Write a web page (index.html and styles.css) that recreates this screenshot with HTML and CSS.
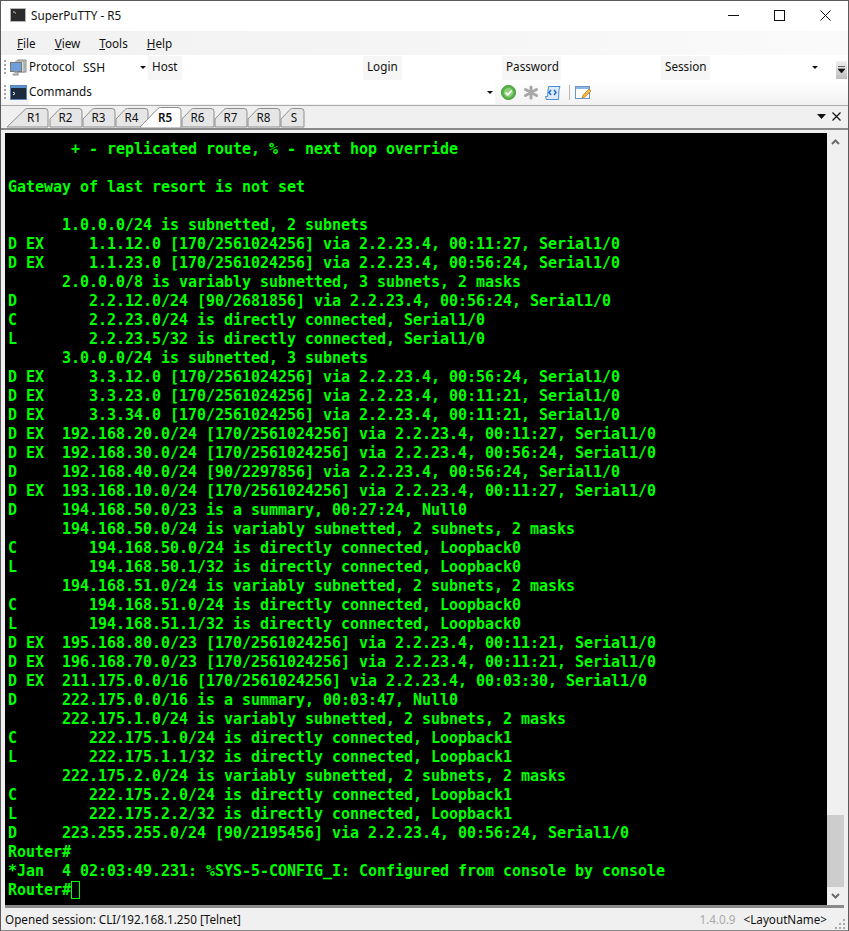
FILE: index.html
```html
<!DOCTYPE html>
<html lang="en">
<head>
<meta charset="utf-8">
<title>SuperPuTTY - R5</title>
<link rel="stylesheet" href="styles.css">
</head>
<body>
<div class="window">
  <header class="titlebar">
    <svg class="app-icon" width="16" height="14" viewBox="0 0 16 14"><rect x=".5" y=".5" width="15" height="13" fill="#2b2b2b" stroke="#b5b5b5"/><path d="M3 4h2M5 5h1" stroke="#ccc"/></svg>
    <span class="title-text">SuperPuTTY - R5</span>
    <div class="win-buttons">
      <svg width="11" height="11" viewBox="0 0 11 11"><path d="M0 5.500h11" stroke="#111"/></svg>
      <svg width="11" height="11" viewBox="0 0 11 11"><rect x=".5" y=".5" width="10" height="10" fill="none" stroke="#111"/></svg>
      <svg width="11" height="11" viewBox="0 0 11 11"><path d="M.5.500l10 10M10.500.500l-10 10" stroke="#111"/></svg>
    </div>
  </header>

  <nav class="menubar">
    <span class="menu-item"><u>F</u>ile</span>
    <span class="menu-item"><u>V</u>iew</span>
    <span class="menu-item"><u>T</u>ools</span>
    <span class="menu-item"><u>H</u>elp</span>
  </nav>

  <div class="toolbar toolbar-conn">
    <span class="grip"></span>
    <svg class="tool-icon" width="17" height="17" viewBox="0 0 17 17"><rect x="8" y="1" width="8" height="12" fill="#ccc" stroke="#8a8a8a"/><rect x="6" y="2" width="8" height="11" fill="#ddd" stroke="#999"/><rect x=".5" y="3.500" width="11" height="9" fill="#6f9fd8" stroke="#777"/><path d="M4 13h4v2H3v1h6" fill="#bbb" stroke="#999"/><path d="M14 7h1" stroke="#3c3"/></svg>
    <span class="tool-label label-protocol">Protocol</span>
    <span class="combo combo-proto"><span class="combo-text">SSH</span><span class="combo-arrow"></span></span>
    <span class="tool-label label-host">Host</span>
    <span class="field field-host"></span>
    <span class="tool-label label-login">Login</span>
    <span class="field field-login"></span>
    <span class="tool-label label-password">Password</span>
    <span class="field field-pass"></span>
    <span class="tool-label label-session">Session</span>
    <span class="combo combo-session"><span class="combo-arrow"></span></span>
    <span class="overflow-btn"><svg width="7" height="8" viewBox="0 0 7 8"><path d="M0 .5h7M0 3h7L3.500 7z" fill="#111" stroke="#111" stroke-width=".6"/></svg></span>
  </div>

  <div class="toolbar toolbar-cmd">
    <span class="grip"></span>
    <svg class="tool-icon" width="17" height="16" viewBox="0 0 17 16"><rect x=".5" y=".5" width="16" height="14" fill="#1d2b3c" stroke="#5b86b8"/><rect x="1" y="1" width="15" height="2" fill="#5f93d0"/><path d="M3 7l2 1.500L3 10" fill="none" stroke="#fff"/></svg>
    <span class="tool-label label-commands">Commands</span>
    <span class="combo combo-cmd"><span class="combo-arrow"></span></span>
    <svg class="cmd-icon cmd-check" width="15" height="15" viewBox="0 0 15 15"><circle cx="7.500" cy="7.500" r="7" fill="#5cb54a" stroke="#3f9233"/><circle cx="7.500" cy="7.500" r="4.600" fill="#8bd27a"/><path d="M4.500 7.500l2.200 2.200 4-4" fill="none" stroke="#fff" stroke-width="1.800"/></svg>
    <svg class="cmd-icon cmd-star" width="16" height="15" viewBox="0 0 16 15"><path d="M8 2v11M2.500 4.500l11 6M13.500 4.500l-11 6" stroke="#a8a8a8" stroke-width="3" stroke-linecap="round"/></svg>
    <svg class="cmd-icon cmd-script" width="16" height="16" viewBox="0 0 16 16"><path d="M3.500 1.500h11.500l-1 3-.5 10H1.500l-1-3h2z" fill="#dceafa" stroke="#4a8ed0"/><path d="M6 5L4 7.500 6 10M9 5l2 2.500L9 10" fill="none" stroke="#1f6fc0" stroke-width="1.500"/></svg>
    <span class="cmd-sep"></span>
    <svg class="cmd-icon cmd-edit" width="17" height="16" viewBox="0 0 17 16"><rect x=".5" y="1.500" width="14" height="12" fill="#fff" stroke="#6b93c4"/><rect x="1" y="2" width="13" height="2" fill="#8fb6e2"/><path d="M7 13l1-3 6-6 2 2-6 6z" fill="#f0b840" stroke="#b67a1c" stroke-width=".7"/></svg>
  </div>

  <div class="tabstrip">
    <div class="tab tab-first"><svg class="tab-shape" width="42" height="20" viewBox="0 0 42 20"><path d="M0 19L18 1.500Q19 .5 20.500 .5H38Q41 .5 41 3.500V19z" fill="#e6e6e6" stroke="#8f8f8f"/></svg><span class="tab-label">R1</span></div>
    <div class="tab"><svg class="tab-shape" width="34" height="20" viewBox="0 0 34 20"><path d="M1 19V11L10 1.500Q11 .5 12.500 .5H30Q33 .5 33 3.500V19z" fill="#e6e6e6" stroke="#8f8f8f"/></svg><span class="tab-label">R2</span></div>
    <div class="tab"><svg class="tab-shape" width="34" height="20" viewBox="0 0 34 20"><path d="M1 19V11L10 1.500Q11 .5 12.500 .5H30Q33 .5 33 3.500V19z" fill="#e6e6e6" stroke="#8f8f8f"/></svg><span class="tab-label">R3</span></div>
    <div class="tab"><svg class="tab-shape" width="34" height="20" viewBox="0 0 34 20"><path d="M1 19V11L10 1.500Q11 .5 12.500 .5H30Q33 .5 33 3.500V19z" fill="#e6e6e6" stroke="#8f8f8f"/></svg><span class="tab-label">R4</span></div>
    <div class="tab tab-active"><svg class="tab-shape" width="42" height="22" viewBox="0 0 42 22"><path d="M0 20L18 1.500Q19 .5 20.500 .5H38Q41 .5 41 3.500V21H0z" fill="#fff" stroke="#8f8f8f"/></svg><span class="tab-label">R5</span></div>
    <div class="tab"><svg class="tab-shape" width="34" height="20" viewBox="0 0 34 20"><path d="M1 19V11L10 1.500Q11 .5 12.500 .5H30Q33 .5 33 3.500V19z" fill="#e6e6e6" stroke="#8f8f8f"/></svg><span class="tab-label">R6</span></div>
    <div class="tab"><svg class="tab-shape" width="34" height="20" viewBox="0 0 34 20"><path d="M1 19V11L10 1.500Q11 .5 12.500 .5H30Q33 .5 33 3.500V19z" fill="#e6e6e6" stroke="#8f8f8f"/></svg><span class="tab-label">R7</span></div>
    <div class="tab"><svg class="tab-shape" width="34" height="20" viewBox="0 0 34 20"><path d="M1 19V11L10 1.500Q11 .5 12.500 .5H30Q33 .5 33 3.500V19z" fill="#e6e6e6" stroke="#8f8f8f"/></svg><span class="tab-label">R8</span></div>
    <div class="tab tab-last"><svg class="tab-shape" width="25" height="20" viewBox="0 0 25 20"><path d="M1 19V11L10 1.500Q11 .5 12.500 .5H21Q24 .5 24 3.500V19z" fill="#e6e6e6" stroke="#8f8f8f"/></svg><span class="tab-label">S</span></div>
    <div class="tab-controls">
      <svg width="9" height="5" viewBox="0 0 9 5"><path d="M0 0h9L4.500 5z" fill="#111"/></svg>
      <svg width="9" height="9" viewBox="0 0 9 9"><path d="M.5.500l8 8M8.500.500l-8 8" stroke="#111" stroke-width="1.200"/></svg>
    </div>
  </div>

  <main class="term-frame">
<pre class="terminal">       + - replicated route, % - next hop override

Gateway of last resort is not set

      1.0.0.0/24 is subnetted, 2 subnets
D EX     1.1.12.0 [170/2561024256] via 2.2.23.4, 00:11:27, Serial1/0
D EX     1.1.23.0 [170/2561024256] via 2.2.23.4, 00:56:24, Serial1/0
      2.0.0.0/8 is variably subnetted, 3 subnets, 2 masks
D        2.2.12.0/24 [90/2681856] via 2.2.23.4, 00:56:24, Serial1/0
C        2.2.23.0/24 is directly connected, Serial1/0
L        2.2.23.5/32 is directly connected, Serial1/0
      3.0.0.0/24 is subnetted, 3 subnets
D EX     3.3.12.0 [170/2561024256] via 2.2.23.4, 00:56:24, Serial1/0
D EX     3.3.23.0 [170/2561024256] via 2.2.23.4, 00:11:21, Serial1/0
D EX     3.3.34.0 [170/2561024256] via 2.2.23.4, 00:11:21, Serial1/0
D EX  192.168.20.0/24 [170/2561024256] via 2.2.23.4, 00:11:27, Serial1/0
D EX  192.168.30.0/24 [170/2561024256] via 2.2.23.4, 00:56:24, Serial1/0
D     192.168.40.0/24 [90/2297856] via 2.2.23.4, 00:56:24, Serial1/0
D EX  193.168.10.0/24 [170/2561024256] via 2.2.23.4, 00:11:27, Serial1/0
D     194.168.50.0/23 is a summary, 00:27:24, Null0
      194.168.50.0/24 is variably subnetted, 2 subnets, 2 masks
C        194.168.50.0/24 is directly connected, Loopback0
L        194.168.50.1/32 is directly connected, Loopback0
      194.168.51.0/24 is variably subnetted, 2 subnets, 2 masks
C        194.168.51.0/24 is directly connected, Loopback0
L        194.168.51.1/32 is directly connected, Loopback0
D EX  195.168.80.0/23 [170/2561024256] via 2.2.23.4, 00:11:21, Serial1/0
D EX  196.168.70.0/23 [170/2561024256] via 2.2.23.4, 00:11:21, Serial1/0
D EX  211.175.0.0/16 [170/2561024256] via 2.2.23.4, 00:03:30, Serial1/0
D     222.175.0.0/16 is a summary, 00:03:47, Null0
      222.175.1.0/24 is variably subnetted, 2 subnets, 2 masks
C        222.175.1.0/24 is directly connected, Loopback1
L        222.175.1.1/32 is directly connected, Loopback1
      222.175.2.0/24 is variably subnetted, 2 subnets, 2 masks
C        222.175.2.0/24 is directly connected, Loopback1
L        222.175.2.2/32 is directly connected, Loopback1
D     223.255.255.0/24 [90/2195456] via 2.2.23.4, 00:56:24, Serial1/0
Router#
*Jan  4 02:03:49.231: %SYS-5-CONFIG_I: Configured from console by console
Router#<span class="cursor"></span></pre>
    <div class="scrollbar">
      <svg class="scroll-arrow" width="9" height="6" viewBox="0 0 9 6"><path d="M1 5l3.500-3.500L8 5" fill="none" stroke="#6a6a6a" stroke-width="2"/></svg>
      <span class="scroll-track"><span class="scroll-thumb"></span></span>
      <svg class="scroll-arrow" width="9" height="6" viewBox="0 0 9 6"><path d="M1 1l3.500 3.500L8 1" fill="none" stroke="#6a6a6a" stroke-width="2"/></svg>
    </div>
  </main>

  <footer class="statusbar">
    <span class="status-text">Opened session: CLI/192.168.1.250 [Telnet]</span>
    <span class="status-version">1.4.0.9</span>
    <span class="status-layout">&lt;LayoutName&gt;</span>
    <svg class="resize-grip" width="11" height="11" viewBox="0 0 11 11"><path d="M8 1h2v2H8zM4 5h2v2H4zM8 5h2v2H8zM0 9h2v2H0zM4 9h2v2H4zM8 9h2v2H8z" fill="#a8a8a8"/></svg>
  </footer>
</div>
</body>
</html>
```
FILE: styles.css
```css
* { box-sizing: border-box; }
html, body { margin: 0; padding: 0; background: #fff; }
body { width: 849px; height: 931px; overflow: hidden; font-family: "Noto Sans", "Open Sans", sans-serif; font-size: 11.7px; color: #111; }
.window { width: 849px; height: 931px; display: flex; flex-direction: column; border: 1px solid #5a5a5a; border-bottom: 0; background: #f0f0f0; }

.titlebar { height: 30px; flex: none; display: flex; align-items: center; background: #fff; padding: 0 0 2px 9px; }
.app-icon { margin-right: 5px; }
.title-text { font-size: 11.7px; }
.win-buttons { margin-left: auto; display: flex; gap: 35px; padding-right: 17px; align-items: center; }

.menubar { height: 24px; flex: none; display: flex; align-items: center; padding-left: 16px; gap: 19px; background: linear-gradient(90deg, #f1f1f1, #fafafa); }
.menu-item { font-size: 11.7px; }

.toolbar { flex: none; display: flex; align-items: center; }
.toolbar-conn { height: 25px; background: #fff; padding-left: 3px; }
.toolbar-cmd { height: 26px; background: linear-gradient(#ffffff, #f2f2f2); padding-left: 3px; border-bottom: 1px solid #a9a9a9; }
.grip { width: 2px; height: 15px; margin-right: 4px; background: repeating-linear-gradient(#a5a5a5 0 2px, transparent 2px 4px); }
.tool-icon { margin-right: 2px; flex: none; }
.tool-label { font-size: 11.7px; height: 24px; line-height: 21px; background: #f6f6f6; padding: 0 4px 0 0; flex: none; }
.label-protocol { width: 50px; padding-left: 0; background: #fff; }
.label-host { width: 34px; padding-left: 4px; }
.label-login { width: 39px; padding-left: 4px; }
.label-password { width: 59px; padding-left: 4px; }
.label-session { width: 49px; padding-left: 4px; }
.label-commands { width: 66px; padding-left: 0; background: #fff; line-height: 21px; }
.field { display: block; height: 24px; background: #fff; flex: none; }
.field-host { width: 181px; }
.field-login { width: 100px; }
.field-pass { width: 100px; }
.combo { display: flex; align-items: center; height: 24px; background: #fff; flex: none; }
.combo-proto { width: 69px; padding-left: 4px; }
.combo-text { font-size: 12px; }
.combo-session { width: 110px; }
.combo-cmd { width: 400px; height: 22px; }
.combo-arrow { margin-left: auto; width: 11px; display: flex; justify-content: center; }
.combo-arrow::before { content: ""; border: 3px solid transparent; border-top: 3px solid #111; border-bottom: 0; }
.overflow-btn { margin-left: auto; width: 11px; height: 18px; align-self: flex-end; margin-bottom: 1px; background: linear-gradient(#f0f0f0, #bcbcbc); display: flex; align-items: center; justify-content: center; margin-right: 1px; }
.cmd-icon { flex: none; }
.cmd-check { margin-left: 6px; }
.cmd-star { margin-left: 7px; }
.cmd-script { margin-left: 6px; }
.cmd-edit { margin-left: 5px; }
.cmd-sep { width: 1px; height: 15px; background: #b5b5b5; margin: 0 0 0 8px; }

.tabstrip { height: 24px; flex: none; display: flex; align-items: flex-end; background: #f0f0f0; padding: 0 0 1px 6px; border-bottom: 2px solid #8a8a8a; }
.tab { position: relative; width: 33px; height: 20px; flex: none; text-align: center; }
.tab-shape { position: absolute; left: 0; bottom: -1px; }
.tab-label { position: relative; display: block; font-size: 11.7px; line-height: 21px; }
.tab-first { width: 42px; padding-left: 12px; }
.tab-active { margin-left: -8px; width: 41px; padding-left: 9px; z-index: 2; font-weight: 600; }
.tab-active .tab-shape { bottom: -2px; }
.tab-last { width: 25px; padding-left: 3px; }
.tab-controls { margin-left: auto; display: flex; align-items: center; gap: 6px; padding: 0 7px 1px 0; align-self: center; }

.term-frame { flex: 1; min-height: 0; display: flex; margin: 3px 4px 0 4px; background: #000; border-bottom: 3px solid #8a8a8a; }
.terminal { flex: 1; min-width: 0; margin: 0; padding: 7px 0 0 3px; overflow: hidden; background: #000; color: #00ff00; font-family: "DejaVu Sans Mono", "Liberation Mono", monospace; font-weight: 700; font-size: 15px; line-height: 19px; letter-spacing: -.03px; }
.cursor { display: inline-block; width: 9px; height: 18px; border: 1px solid #00ff00; vertical-align: -4px; }
.scrollbar { width: 17px; flex: none; background: #f0f0f0; display: flex; flex-direction: column; align-items: center; }
.scroll-arrow { flex: none; margin: 6px 0; }
.scroll-track { flex: 1; width: 100%; display: flex; align-items: flex-end; }
.scroll-thumb { display: block; width: 100%; height: 72px; background: #cdcdcd; }

.statusbar { flex: none; height: 23px; display: flex; align-items: center; background: #f0f0f0; padding: 0 2px 0 4px; border-bottom: 1px solid #8a8a8a; }
.status-text { font-size: 11.7px; }
.status-version { margin-left: auto; font-size: 11.7px; color: #a8a8a8; }
.status-layout { font-size: 11.7px; margin-left: 8px; }
.resize-grip { margin-left: 8px; align-self: flex-end; margin-bottom: 1px; }
```
